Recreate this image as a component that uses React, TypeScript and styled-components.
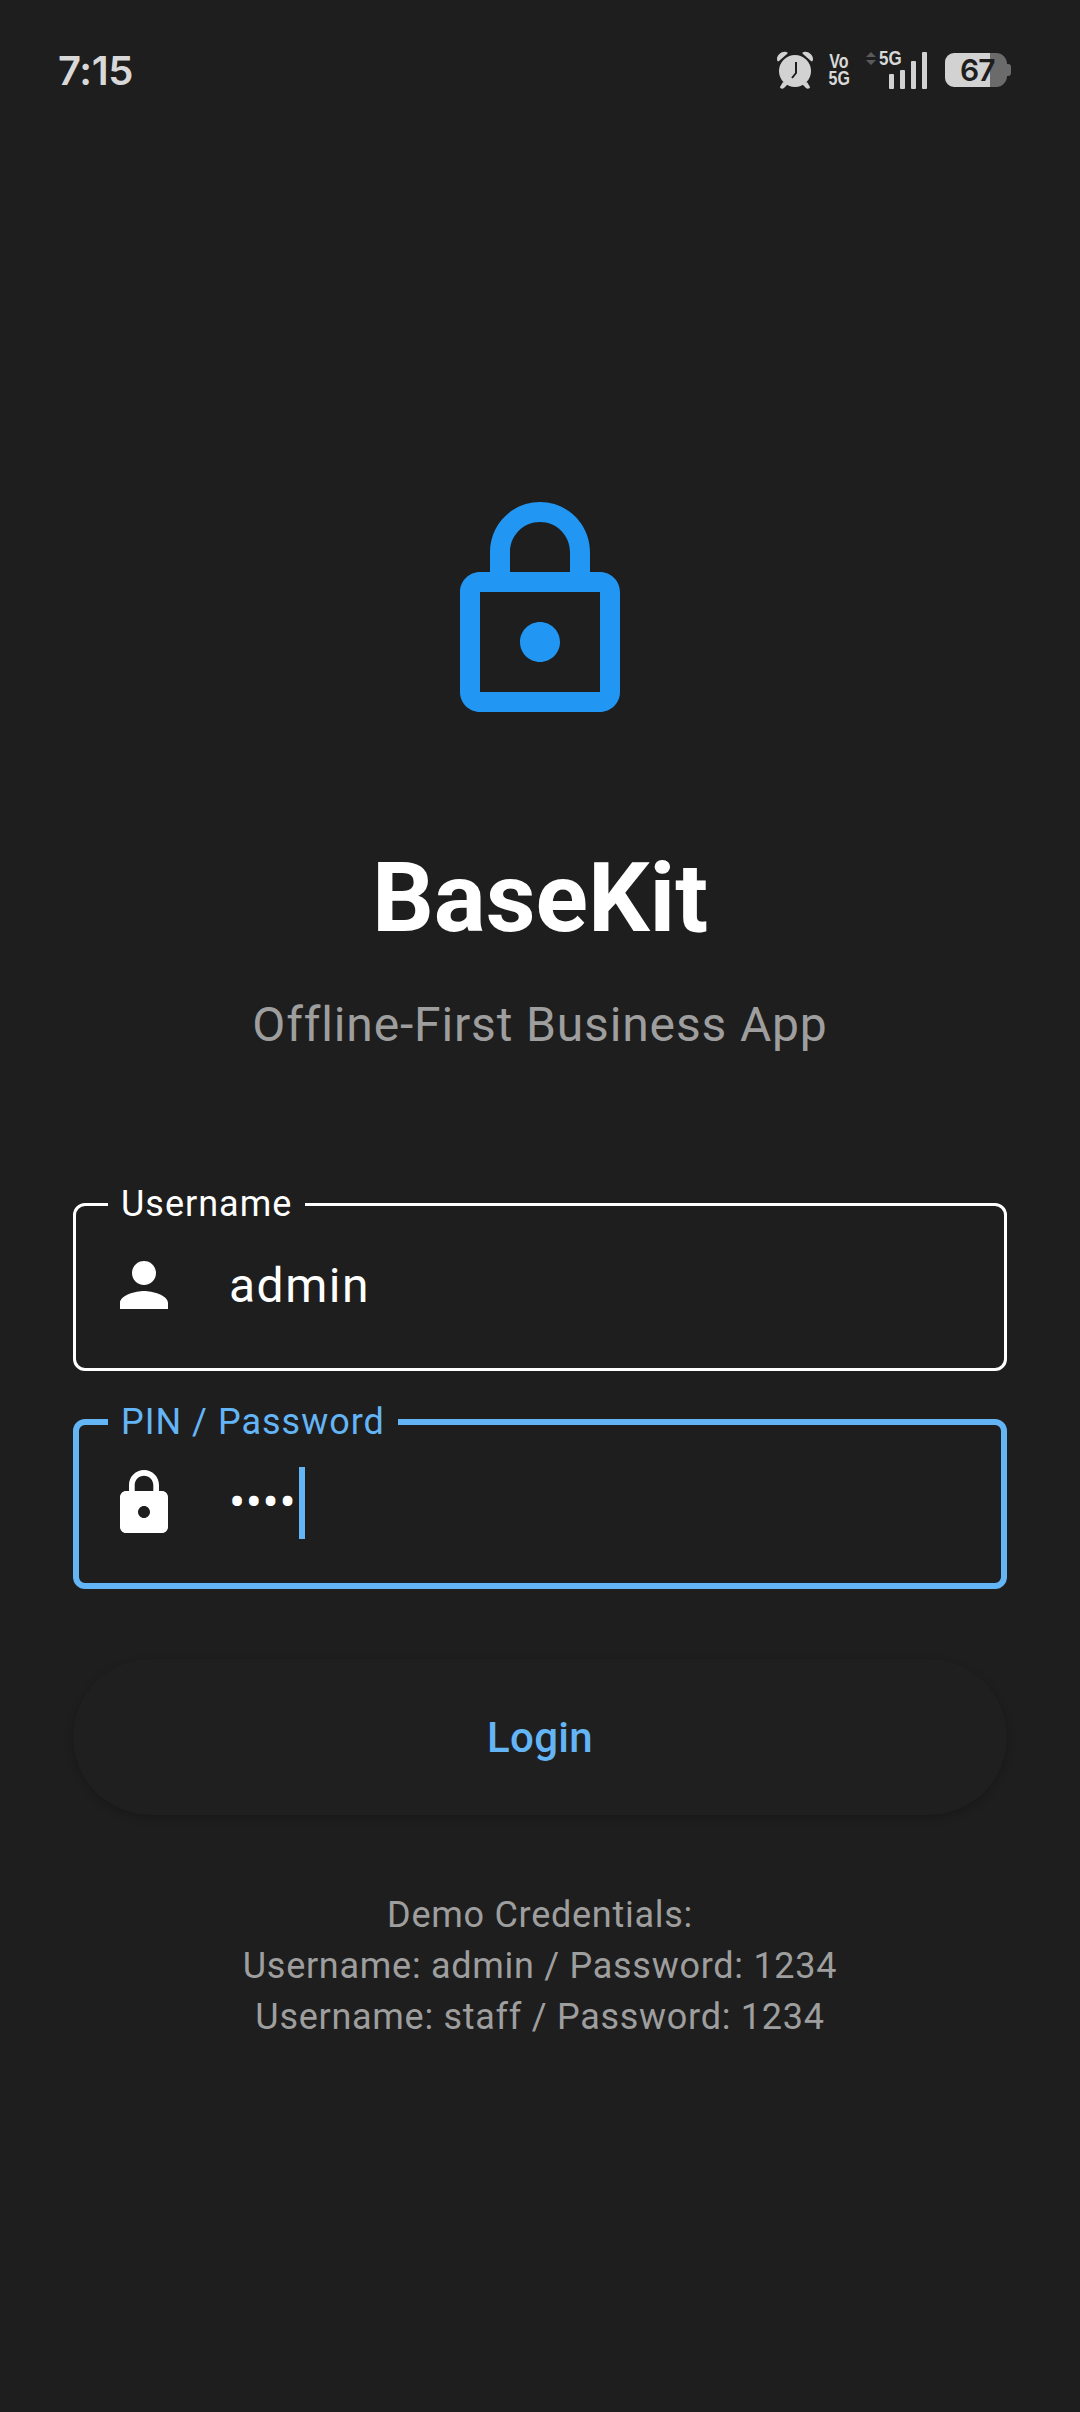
import styled, { createGlobalStyle } from "styled-components"

const GlobalStyle = createGlobalStyle`
    html, body {
        margin: 0;
        padding: 0;
        background: #1e1e1e;
    }
    * {
        box-sizing: border-box;
    }
`

const Page = styled.div`
    width: 1080px;
    height: 2412px;
    overflow: hidden;
    background: #1e1e1e;
    font-family: Roboto, "Noto Sans", sans-serif;
    color: #fff;
`

const StatusBar = styled.div`
    height: 120px;
    padding: 20px 73px 0 58px;
    display: flex;
    justify-content: space-between;
    align-items: center;
    color: #d8d8d8;
`

const Time = styled.div`
    font-family: Inter, sans-serif;
    font-size: 40px;
    font-weight: 600;
    letter-spacing: -0.4px;
`

const StatusIcons = styled.div`
    display: flex;
    align-items: center;
`

const Vo = styled.div`
    width: 26px;
    margin: 0 -2px 0 12px;
    text-align: center;
    font-family: "Liberation Sans", sans-serif;
    font-weight: 700;
    font-size: 20px;
    line-height: 17px;
    transform: scaleX(0.8);
`

const Signal = styled.div`
    position: relative;
    width: 62px;
    height: 38px;
    margin-left: 16px;
`

const FiveG = styled.span`
    position: absolute;
    left: 13px;
    top: -3px;
    font-family: "Liberation Sans", sans-serif;
    font-weight: 700;
    font-size: 20px;
    line-height: 20px;
    transform: scaleX(0.85);
    transform-origin: left center;
`

const Battery = styled.div`
    position: relative;
    width: 62px;
    height: 34px;
    margin-left: 17px;
    border-radius: 9px 11px 11px 9px;
    background: linear-gradient(to right, #d2d2d2 45px, #6b6b6b 45px);
    color: #1e1e1e;
    font-family: Inter, sans-serif;
    font-weight: 600;
    font-size: 30px;
    line-height: 34px;
    padding-left: 15px;
    letter-spacing: -1px;

    &::after {
        content: "";
        position: absolute;
        right: -4px;
        top: 11px;
        width: 4px;
        height: 12px;
        border-radius: 0 3px 3px 0;
        background: #6b6b6b;
    }
`

const Main = styled.main`
    padding: 0 73px;
    display: flex;
    flex-direction: column;
    align-items: center;
`

const LogoIcon = styled.svg`
    display: block;
    width: 240px;
    height: 240px;
    margin-top: 372px;
    fill: #2196f3;
`

const Title = styled.h1`
    margin: 110px 0 0;
    font-size: 97px;
    line-height: 112px;
    font-weight: 700;
`

const Subtitle = styled.p`
    margin: 39px 0 0;
    font-size: 48px;
    line-height: 64px;
    letter-spacing: 0.85px;
    color: #9e9e9e;
`

const Form = styled.form`
    width: 100%;
    margin-top: 126px;
    display: flex;
    flex-direction: column;
    gap: 30px;
`

const Field = styled.fieldset<{ $focused?: boolean }>`
    margin: 0;
    min-width: 0;
    height: 188px;
    padding: 0 0 0 ${(p) => (p.$focused ? "29px" : "32px")};
    border: ${(p) => (p.$focused ? "6px solid #64b5f6" : "3px solid #fff")};
    border-radius: 12px;
`

const Label = styled.legend<{ $focused?: boolean }>`
    padding: 0 13px 0 13px;
    font-size: 36px;
    line-height: 42px;
    letter-spacing: 1px;
    color: ${(p) => (p.$focused ? "#64b5f6" : "#fff")};
`

const FieldRow = styled.div`
    display: flex;
    align-items: center;
    height: 120px;
    gap: 49px;
`

const FieldIcon = styled.svg`
    width: 72px;
    height: 72px;
    flex: none;
    fill: #fff;
`

const Value = styled.span`
    font-size: 48px;
    letter-spacing: 1.5px;
    color: #fff;
`

const Dots = styled.span`
    font-size: 48px;
    line-height: 72px;
    letter-spacing: 0.6px;
    color: #fff;
`

const Caret = styled.span`
    width: 6px;
    height: 72px;
    margin-left: 3px;
    background: #64b5f6;
`

const PasswordValue = styled.div`
    display: flex;
    align-items: center;
`

const LoginButton = styled.button`
    width: 100%;
    height: 156px;
    margin-top: 70px;
    border: none;
    border-radius: 78px;
    background: #1f1f1f;
    box-shadow: 0 3px 8px rgba(0, 0, 0, 0.2);
    color: #64b5f6;
    font-family: Roboto, sans-serif;
    font-size: 42px;
    font-weight: 500;
    letter-spacing: 0.3px;
`

const Demo = styled.div`
    margin-top: 75px;
    text-align: center;
    font-size: 36px;
    line-height: 51px;
    letter-spacing: 0.72px;
    color: #9e9e9e;
`

const App = () => {
    return (
        <Page>
            <GlobalStyle />
            <StatusBar>
                <Time>7:15</Time>
                <StatusIcons>
                    <svg width="38" height="38" viewBox="0 0 38 38" fill="#d2d2d2">
                        <circle cx="19" cy="20" r="16" />
                        <path d="M1 8c0-4 5-8 9-7 2 0 2 1 1 2L3 10c-1 1-2 0-2-2zM37 8c0-4-5-8-9-7-2 0-2 1-1 2l8 7c1 1 2 0 2-2z" />
                        <path d="M7 31l-3 5c0 2 3 2 4 1l4-4zM31 31l3 5c0 2-3 2-4 1l-4-4z" />
                        <path d="M20 11v11l-4 5" fill="none" stroke="#1e1e1e" strokeWidth="2" />
                    </svg>
                    <Vo>Vo 5G</Vo>
                    <Signal>
                        <FiveG>5G</FiveG>
                        <svg width="62" height="38" viewBox="0 0 62 38" fill="#d2d2d2">
                            <path d="M0 6l5-5 5 5zM0 9l5 5 5-5z" fill="#5a5a5a" />
                            <rect x="23" y="23" width="5" height="15" rx="1" />
                            <rect x="34" y="19" width="5" height="19" rx="1" />
                            <rect x="45" y="10" width="5" height="28" rx="1" />
                            <rect x="56" y="1" width="5" height="37" rx="1" />
                        </svg>
                    </Signal>
                    <Battery>67</Battery>
                </StatusIcons>
            </StatusBar>
            <Main>
                <LogoIcon viewBox="0 0 24 24">
                    <path d="M18 8h-1V6c0-2.76-2.24-5-5-5S7 3.24 7 6v2H6c-1.1 0-2 .9-2 2v10c0 1.1.9 2 2 2h12c1.1 0 2-.9 2-2V10c0-1.1-.9-2-2-2zM9 6c0-1.66 1.34-3 3-3s3 1.34 3 3v2H9V6zm9 14H6V10h12v10zm-6-3c1.1 0 2-.9 2-2s-.9-2-2-2-2 .9-2 2 .9 2 2 2z" />
                </LogoIcon>
                <Title>BaseKit</Title>
                <Subtitle>Offline-First Business App</Subtitle>
                <Form>
                    <Field>
                        <Label>Username</Label>
                        <FieldRow>
                            <FieldIcon viewBox="0 0 24 24">
                                <path d="M12 12c2.21 0 4-1.79 4-4s-1.79-4-4-4-4 1.79-4 4 1.79 4 4 4zm0 2c-2.67 0-8 1.34-8 4v2h16v-2c0-2.66-5.33-4-8-4z" />
                            </FieldIcon>
                            <Value>admin</Value>
                        </FieldRow>
                    </Field>
                    <Field $focused>
                        <Label $focused>PIN / Password</Label>
                        <FieldRow>
                            <FieldIcon viewBox="0 0 24 24">
                                <path d="M18 8h-1V6c0-2.76-2.24-5-5-5S7 3.24 7 6v2H6c-1.1 0-2 .9-2 2v10c0 1.1.9 2 2 2h12c1.1 0 2-.9 2-2V10c0-1.1-.9-2-2-2zm-6 9c-1.1 0-2-.9-2-2s.9-2 2-2 2 .9 2 2-.9 2-2 2zm3.1-9H8.9V6c0-1.71 1.39-3.1 3.1-3.1 1.71 0 3.1 1.39 3.1 3.1v2z" />
                            </FieldIcon>
                            <PasswordValue>
                                <Dots>••••</Dots>
                                <Caret />
                            </PasswordValue>
                        </FieldRow>
                    </Field>
                </Form>
                <LoginButton type="button">Login</LoginButton>
                <Demo>
                    Demo Credentials:
                    <br />
                    Username: admin / Password: 1234
                    <br />
                    Username: staff / Password: 1234
                </Demo>
            </Main>
        </Page>
    )
}

export default App
